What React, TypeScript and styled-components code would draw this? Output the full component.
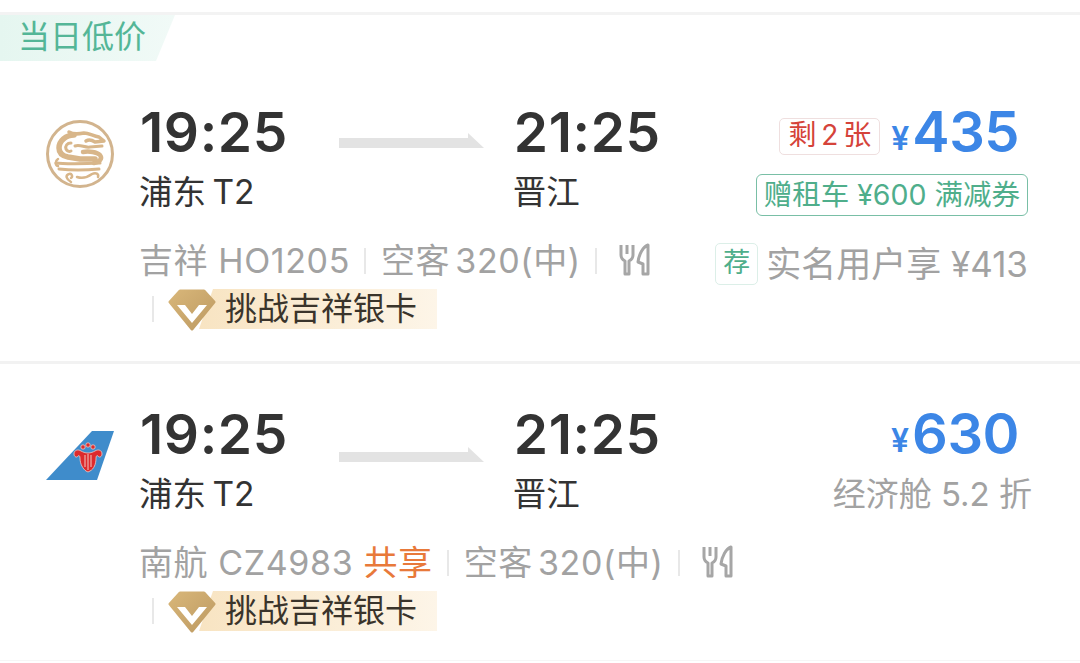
import React from "react"
import styled, { createGlobalStyle } from "styled-components"

const GlobalStyle = createGlobalStyle`
    html, body { margin: 0; padding: 0; background: #fff; }
    body {
        width: 1080px;
        height: 663px;
        overflow: hidden;
        font-family: "Inter", "Noto Sans CJK SC", sans-serif;
    }
`

function JuneyaoLogo() {
    return (
        <svg width="70" height="70" viewBox="0 0 70 70">
            <circle cx="35" cy="35" r="32.5" fill="#fff" stroke="#d2b48e" strokeWidth="3" />
            <g fill="none" stroke="#d8b68a" strokeLinecap="round" strokeLinejoin="round">
                <path d="M24 13c5 3 10 2 15 1 5 0 9 3 15 4l5 4-9 1c-3-2-6-3-9-1" strokeWidth="3.5" />
                <path d="M29 16c-8 0-15 6-15 13 0 5 4 8 9 9l12 2h15" strokeWidth="5.5" />
                <path d="M26 24c-4 0-6 3-5 6 1 2 3 3 5 2" strokeWidth="3" />
                <path d="M30 27c5-2 10 2 15 1l12-1" strokeWidth="3" />
                <path d="M38 33c6-1 14 0 17 3 3 4-1 7-6 8" strokeWidth="4.5" />
                <path d="M11 44c6 1 28 1 44 0" strokeWidth="3" />
                <path d="M14 50c10 1 28 1 40 0" strokeWidth="3" />
                <path d="M13 40c-3 2-3 6 0 7" strokeWidth="2.5" />
                <path d="M26 63c-5-3-6-7-2-8 3-1 4 3 2 4" strokeWidth="2.5" />
                <path d="M32 58c6 2 11 0 15-3 4-2 7 0 6 3" strokeWidth="2.5" />
            </g>
        </svg>
    )
}

function SouthernLogo() {
    return (
        <svg width="70" height="52" viewBox="0 0 70 52">
            <polygon points="47,1 69,1 52,50 1,50" fill="#3f8ccb" />
            <g fill="#dd2a2c" stroke="#f1c9c2" strokeWidth="0.8">
                <path d="M36 21c-3-2-7-1-7 3 0 3 3 4 4 2 1-1 2 0 2 2 0 6 3 11 6 13l2 1 2-1c4-2 6-7 6-13 0-2 1-3 2-2 1 2 4 1 4-2 0-4-4-5-7-3-2 1-4 2-7 2s-5-1-7-2z" />
                <circle cx="38" cy="17" r="2.2" />
                <circle cx="48" cy="17" r="2.2" />
                <circle cx="43" cy="15" r="2.2" />
            </g>
            <path d="M40 25v12M43 24v16M46 25v12" stroke="#f1c9c2" strokeWidth="1" />
        </svg>
    )
}

function ArrowLine() {
    return (
        <svg width="145" height="16" viewBox="0 0 145 16">
            <polygon points="0,5 129,5 129,0 145,15 0,15" fill="#e3e3e3" />
        </svg>
    )
}

function MealIcon() {
    return (
        <svg width="32" height="33" viewBox="0 0 32 33" fill="none" stroke="#a6a6a6" strokeWidth="3" strokeLinejoin="round">
            <path d="M2 2v10c0 3 2 5 4 6v13h4V18c2-1 4-3 4-6V2" />
            <path d="M8 2v9" />
            <path d="M29 2c-5 2-9 9-10 17l5 2v10h5z" />
        </svg>
    )
}

function DiamondIcon() {
    return (
        <svg width="50" height="42" viewBox="0 0 50 42">
            <defs>
                <linearGradient id="goldGrad" x1="0" y1="0" x2="1" y2="1">
                    <stop offset="0" stopColor="#d8b679" />
                    <stop offset="1" stopColor="#bd9a62" />
                </linearGradient>
            </defs>
            <polygon points="13,2 37,2 47,13 25,40 3,13" fill="url(#goldGrad)" stroke="url(#goldGrad)" strokeWidth="3" strokeLinejoin="round" />
            <polygon points="10,16 18,16 25,25 32,16 40,16 25,34" fill="#fff" />
        </svg>
    )
}

function Challenge() {
    return (
        <ChallengeGroup>
            <Divider $wrapped />
            <ChallengeWrap>
                <ChallengeText>挑战吉祥银卡</ChallengeText>
                <DiamondSlot><DiamondIcon /></DiamondSlot>
            </ChallengeWrap>
        </ChallengeGroup>
    )
}

export default function App() {
    return (
        <>
            <GlobalStyle />
            <Page>
                <Card $kind="first">
                    <Tag>当日低价</Tag>
                    <Flight>
                        <LogoCol><JuneyaoLogo /></LogoCol>
                        <Main>
                            <Times>
                                <Stop>
                                    <Time>19:25</Time>
                                    <Station>浦东 T2</Station>
                                </Stop>
                                <ArrowCol><ArrowLine /></ArrowCol>
                                <Stop>
                                    <Time>21:25</Time>
                                    <Station>晋江</Station>
                                </Stop>
                            </Times>
                            <Meta>
                                <MetaText>吉祥 HO1205</MetaText>
                                <Divider />
                                <MetaText $tight>空客 320(中)</MetaText>
                                <Divider />
                                <MealSlot><MealIcon /></MealSlot>
                                <Challenge />
                            </Meta>
                        </Main>
                        <Side>
                            <PriceRow>
                                <Remain>剩 2 张</Remain>
                                <Yen>¥</Yen>
                                <Price>435</Price>
                            </PriceRow>
                            <Promo>赠租车 ¥600 满减券</Promo>
                            <Recommend>
                                <RecoMark>荐</RecoMark>
                                <RecoText>实名用户享 ¥413</RecoText>
                            </Recommend>
                        </Side>
                    </Flight>
                </Card>
                <Card>
                    <Flight $second>
                        <LogoCol><SouthernLogo /></LogoCol>
                        <Main>
                            <Times>
                                <Stop>
                                    <Time>19:25</Time>
                                    <Station>浦东 T2</Station>
                                </Stop>
                                <ArrowCol $low><ArrowLine /></ArrowCol>
                                <Stop>
                                    <Time>21:25</Time>
                                    <Station>晋江</Station>
                                </Stop>
                            </Times>
                            <Meta>
                                <MetaText>南航 CZ4983 <Shared>共享</Shared></MetaText>
                                <Divider />
                                <MetaText $tight>空客 320(中)</MetaText>
                                <Divider />
                                <MealSlot><MealIcon /></MealSlot>
                                <Challenge />
                            </Meta>
                        </Main>
                        <Side>
                            <PriceRow>
                                <Yen>¥</Yen>
                                <Price>630</Price>
                            </PriceRow>
                            <Discount>经济舱 5.2 折</Discount>
                        </Side>
                    </Flight>
                </Card>
            </Page>
        </>
    )
}

const Page = styled.div`
    width: 1080px;
    height: 663px;
    padding-top: 12px;
    box-sizing: border-box;
    background: #fff;
    display: flex;
    flex-direction: column;
`
const Card = styled.section<{ $kind?: string }>`
    background: #fff;
    flex-shrink: 0;
    border-top: 3px solid ${(p) => (p.$kind === "first" ? "#f3f3f3" : "#f2f2f2")};
    height: ${(p) => (p.$kind === "first" ? "349px" : "300px")};
    box-sizing: border-box;
    &:last-child {
        border-bottom: 1px solid #f6f6f6;
    }
`
const Tag = styled.div`
    width: 175px;
    height: 46px;
    box-sizing: border-box;
    padding-left: 18px;
    font-size: 32px;
    line-height: 44px;
    color: #54b697;
    background: linear-gradient(90deg, #e5f6f0, #f1faf7);
    clip-path: polygon(0 0, 100% 0, 156px 100%, 0 100%);
`
const Flight = styled.div<{ $second?: boolean }>`
    display: flex;
    padding-top: ${(p) => (p.$second ? "39px" : "40px")};
`
const LogoCol = styled.div`
    width: 140px;
    height: 70px;
    flex-shrink: 0;
    padding-left: 45px;
    box-sizing: border-box;
    display: flex;
    align-items: center;
    margin-top: 18px;
`
const Main = styled.div`
    width: 600px;
    flex-shrink: 0;
`
const Times = styled.div`
    display: flex;
`
const Stop = styled.div`
    display: flex;
    flex-direction: column;
`
const Time = styled.div`
    font-size: 55px;
    font-weight: 600;
    line-height: 62px;
    letter-spacing: 0.6px;
    color: #333;
`
const Station = styled.div`
    margin-top: 7px;
    font-size: 33.5px;
    line-height: 44px;
    word-spacing: -3px;
    margin-left: -1px;
    color: #333;
`
const ArrowCol = styled.div<{ $low?: boolean }>`
    width: 226px;
    padding: ${(p) => (p.$low ? "44px" : "32px")} 0 0 51px;
    box-sizing: border-box;
`
const Meta = styled.div`
    margin-top: 25px;
    margin-left: -1px;
    display: flex;
    flex-wrap: wrap;
    align-items: center;
    row-gap: 6px;
`
const MetaText = styled.span<{ $tight?: boolean }>`
    font-size: 34px;
    line-height: 44px;
    letter-spacing: 0.6px;
    word-spacing: ${(p) => (p.$tight ? "-5px" : "0")};
    color: #a2a2a2;
    white-space: nowrap;
`
const Shared = styled.span`
    color: #e8793a;
`
const Divider = styled.i<{ $wrapped?: boolean }>`
    width: 2px;
    height: 26px;
    flex-shrink: 0;
    background: #e8e8e8;
    margin: ${(p) => (p.$wrapped ? "0 13px 0 13px" : "0 15px 0 14px")};
`
const MealSlot = styled.span`
    display: flex;
    margin: 0 0 4px 7px;
`
const ChallengeGroup = styled.div`
    display: flex;
    align-items: center;
    flex-basis: 320px;
`
const ChallengeWrap = styled.div`
    position: relative;
    width: 270px;
    height: 40px;
    padding-left: 32px;
    box-sizing: border-box;
`
const ChallengeText = styled.div`
    height: 40px;
    width: 238px;
    box-sizing: border-box;
    padding-left: 26px;
    font-size: 32px;
    line-height: 40px;
    color: #3a342b;
    background: linear-gradient(90deg, #f8e4c2, #fdf5e8);
    clip-path: polygon(14px 0, 100% 0, 100% 100%, 0 100%);
    white-space: nowrap;
`
const DiamondSlot = styled.span`
    position: absolute;
    left: 0;
    top: 0;
    display: flex;
`
const Side = styled.div`
    flex: 1;
    min-width: 0;
    padding-right: 52px;
    display: flex;
    flex-direction: column;
    align-items: flex-end;
`
const PriceRow = styled.div`
    display: flex;
    align-items: center;
    height: 62px;
    margin-right: 9px;
`
const Remain = styled.span`
    height: 37px;
    padding: 0 8px;
    margin-top: 8px;
    box-sizing: border-box;
    border: 1.5px solid #efdfdf;
    border-radius: 5px;
    font-size: 28px;
    line-height: 33px;
    color: #d5433a;
    margin-right: 11px;
    word-spacing: -3px;
    white-space: nowrap;
`
const Yen = styled.span`
    font-size: 32px;
    font-weight: 600;
    color: #3c86e6;
    margin: 13px 3px 0 0;
`
const Price = styled.span`
    font-size: 56px;
    font-weight: 600;
    line-height: 62px;
    letter-spacing: -0.5px;
    color: #3c86e6;
`
const Promo = styled.div`
    margin-top: 11px;
    height: 42px;
    padding: 0 7px;
    box-sizing: border-box;
    border: 1.5px solid #79bfa6;
    border-radius: 6px;
    font-size: 28.5px;
    line-height: 39px;
    color: #4fae8b;
    white-space: nowrap;
`
const Recommend = styled.div`
    margin-top: 27px;
    display: flex;
    align-items: center;
`
const RecoMark = styled.span`
    width: 43px;
    height: 42px;
    box-sizing: border-box;
    border: 1.5px solid #dcefe8;
    border-radius: 5px;
    font-size: 27px;
    line-height: 38px;
    text-align: center;
    color: #4fae8b;
    margin-right: 8px;
`
const RecoText = styled.span`
    font-size: 35px;
    line-height: 42px;
    color: #a2a2a2;
    white-space: nowrap;
`
const Discount = styled.div`
    margin-top: 7px;
    margin-right: -4px;
    font-size: 33px;
    line-height: 44px;
    color: #a2a2a2;
    white-space: nowrap;
`
